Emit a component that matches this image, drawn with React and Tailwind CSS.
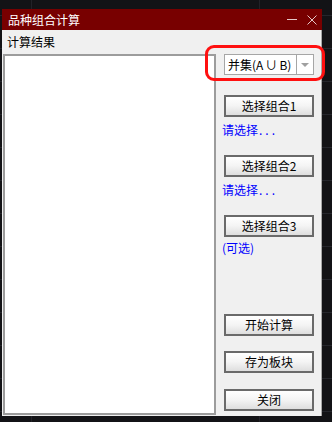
import React from "react";

const font = { fontFamily: '"Noto Sans CJK SC", "Noto Sans", sans-serif' };

function Btn({ children, className = "" }) {
  return (
    <div
      className={
        "w-[90px] h-[22px] border-2 border-[#6a6a6a] bg-gradient-to-b from-white via-[#f4f4f4] to-[#dedede] flex items-center justify-center text-[12px] leading-none text-black " +
        className
      }
    >
      {children}
    </div>
  );
}

export default function App() {
  return (
    <div
      className="w-[332px] h-[422px] bg-[#131316] bg-[linear-gradient(#25262c_1px,transparent_1px),linear-gradient(90deg,#222228_1px,transparent_1px)] bg-[size:100%_33px,228px_100%] bg-[position:0_15px,31px_0] pt-[9px] pl-[2px] overflow-hidden"
      style={font}
    >
      <div className="w-[320px] h-[407px] flex flex-col">
        {/* title bar */}
        <div className="h-[21px] bg-[#780000] flex items-center pl-[6px] pr-[6px]">
          <span className="text-white text-[12px] leading-none flex-1">品种组合计算</span>
          <div className="w-[10px] h-[1px] bg-[#e6c8c8] mr-[10px]" />
          <svg width="10" height="10" viewBox="0 0 10 10" className="mr-[-1px]">
            <path d="M0.5 0.5 L9.5 9.5 M9.5 0.5 L0.5 9.5" stroke="#e6c8c8" strokeWidth="1" />
          </svg>
        </div>
        {/* body */}
        <div className="flex-1 bg-[#f0f0f0] border-r border-[#a8a8a8] flex flex-col">
          <div className="h-[24px] pl-[5px] flex items-center text-[12px] leading-none text-black">计算结果</div>
          <div className="flex-1 flex pb-[1px]">
            <div className="ml-[1px] w-[213px] bg-white border-2 border-[#9c9c9c]" />
            <div className="ml-[8px] flex flex-col pb-[4px]">
              <div className="relative w-[90px] h-[21px] bg-white border border-[#a6a6a6] flex">
                <div className="flex-1 flex items-center pl-[3px] text-[12px] leading-none text-black whitespace-nowrap">
                  并集(A<span className="mx-[2px]">∪</span>B)
                </div>
                <div className="w-[17px] border-l border-[#a6a6a6] flex items-center justify-center">
                  <div className="w-0 h-0 border-l-[4px] border-r-[4px] border-t-[4px] border-l-transparent border-r-transparent border-t-[#a0a0a0]" />
                </div>
                <div className="absolute left-[-20px] top-[-10px] w-[120px] h-[36px] border-[3px] border-[#ff1010] rounded-[9px]" />
              </div>
              <Btn className="mt-[20px]">选择组合1</Btn>
              <div className="mt-[5px] h-[16px] flex items-center text-[12px] leading-none text-[#0000ff] ml-[-2px]">
                请选择<span className="tracking-[3px] ml-[1px]">...</span>
              </div>
              <Btn className="mt-[17px]">选择组合2</Btn>
              <div className="mt-[5px] h-[16px] flex items-center text-[12px] leading-none text-[#0000ff] ml-[-2px]">
                请选择<span className="tracking-[3px] ml-[1px]">...</span>
              </div>
              <Btn className="mt-[17px]">选择组合3</Btn>
              <div className="mt-[3px] h-[16px] flex items-center text-[12px] leading-none text-[#0000ff] ml-[-2px]">(可选)</div>
              <div className="flex-1" />
              <Btn>开始计算</Btn>
              <Btn className="mt-[15px]">存为板块</Btn>
              <Btn className="mt-[16px]">关闭</Btn>
            </div>
          </div>
        </div>
      </div>
    </div>
  );
}
